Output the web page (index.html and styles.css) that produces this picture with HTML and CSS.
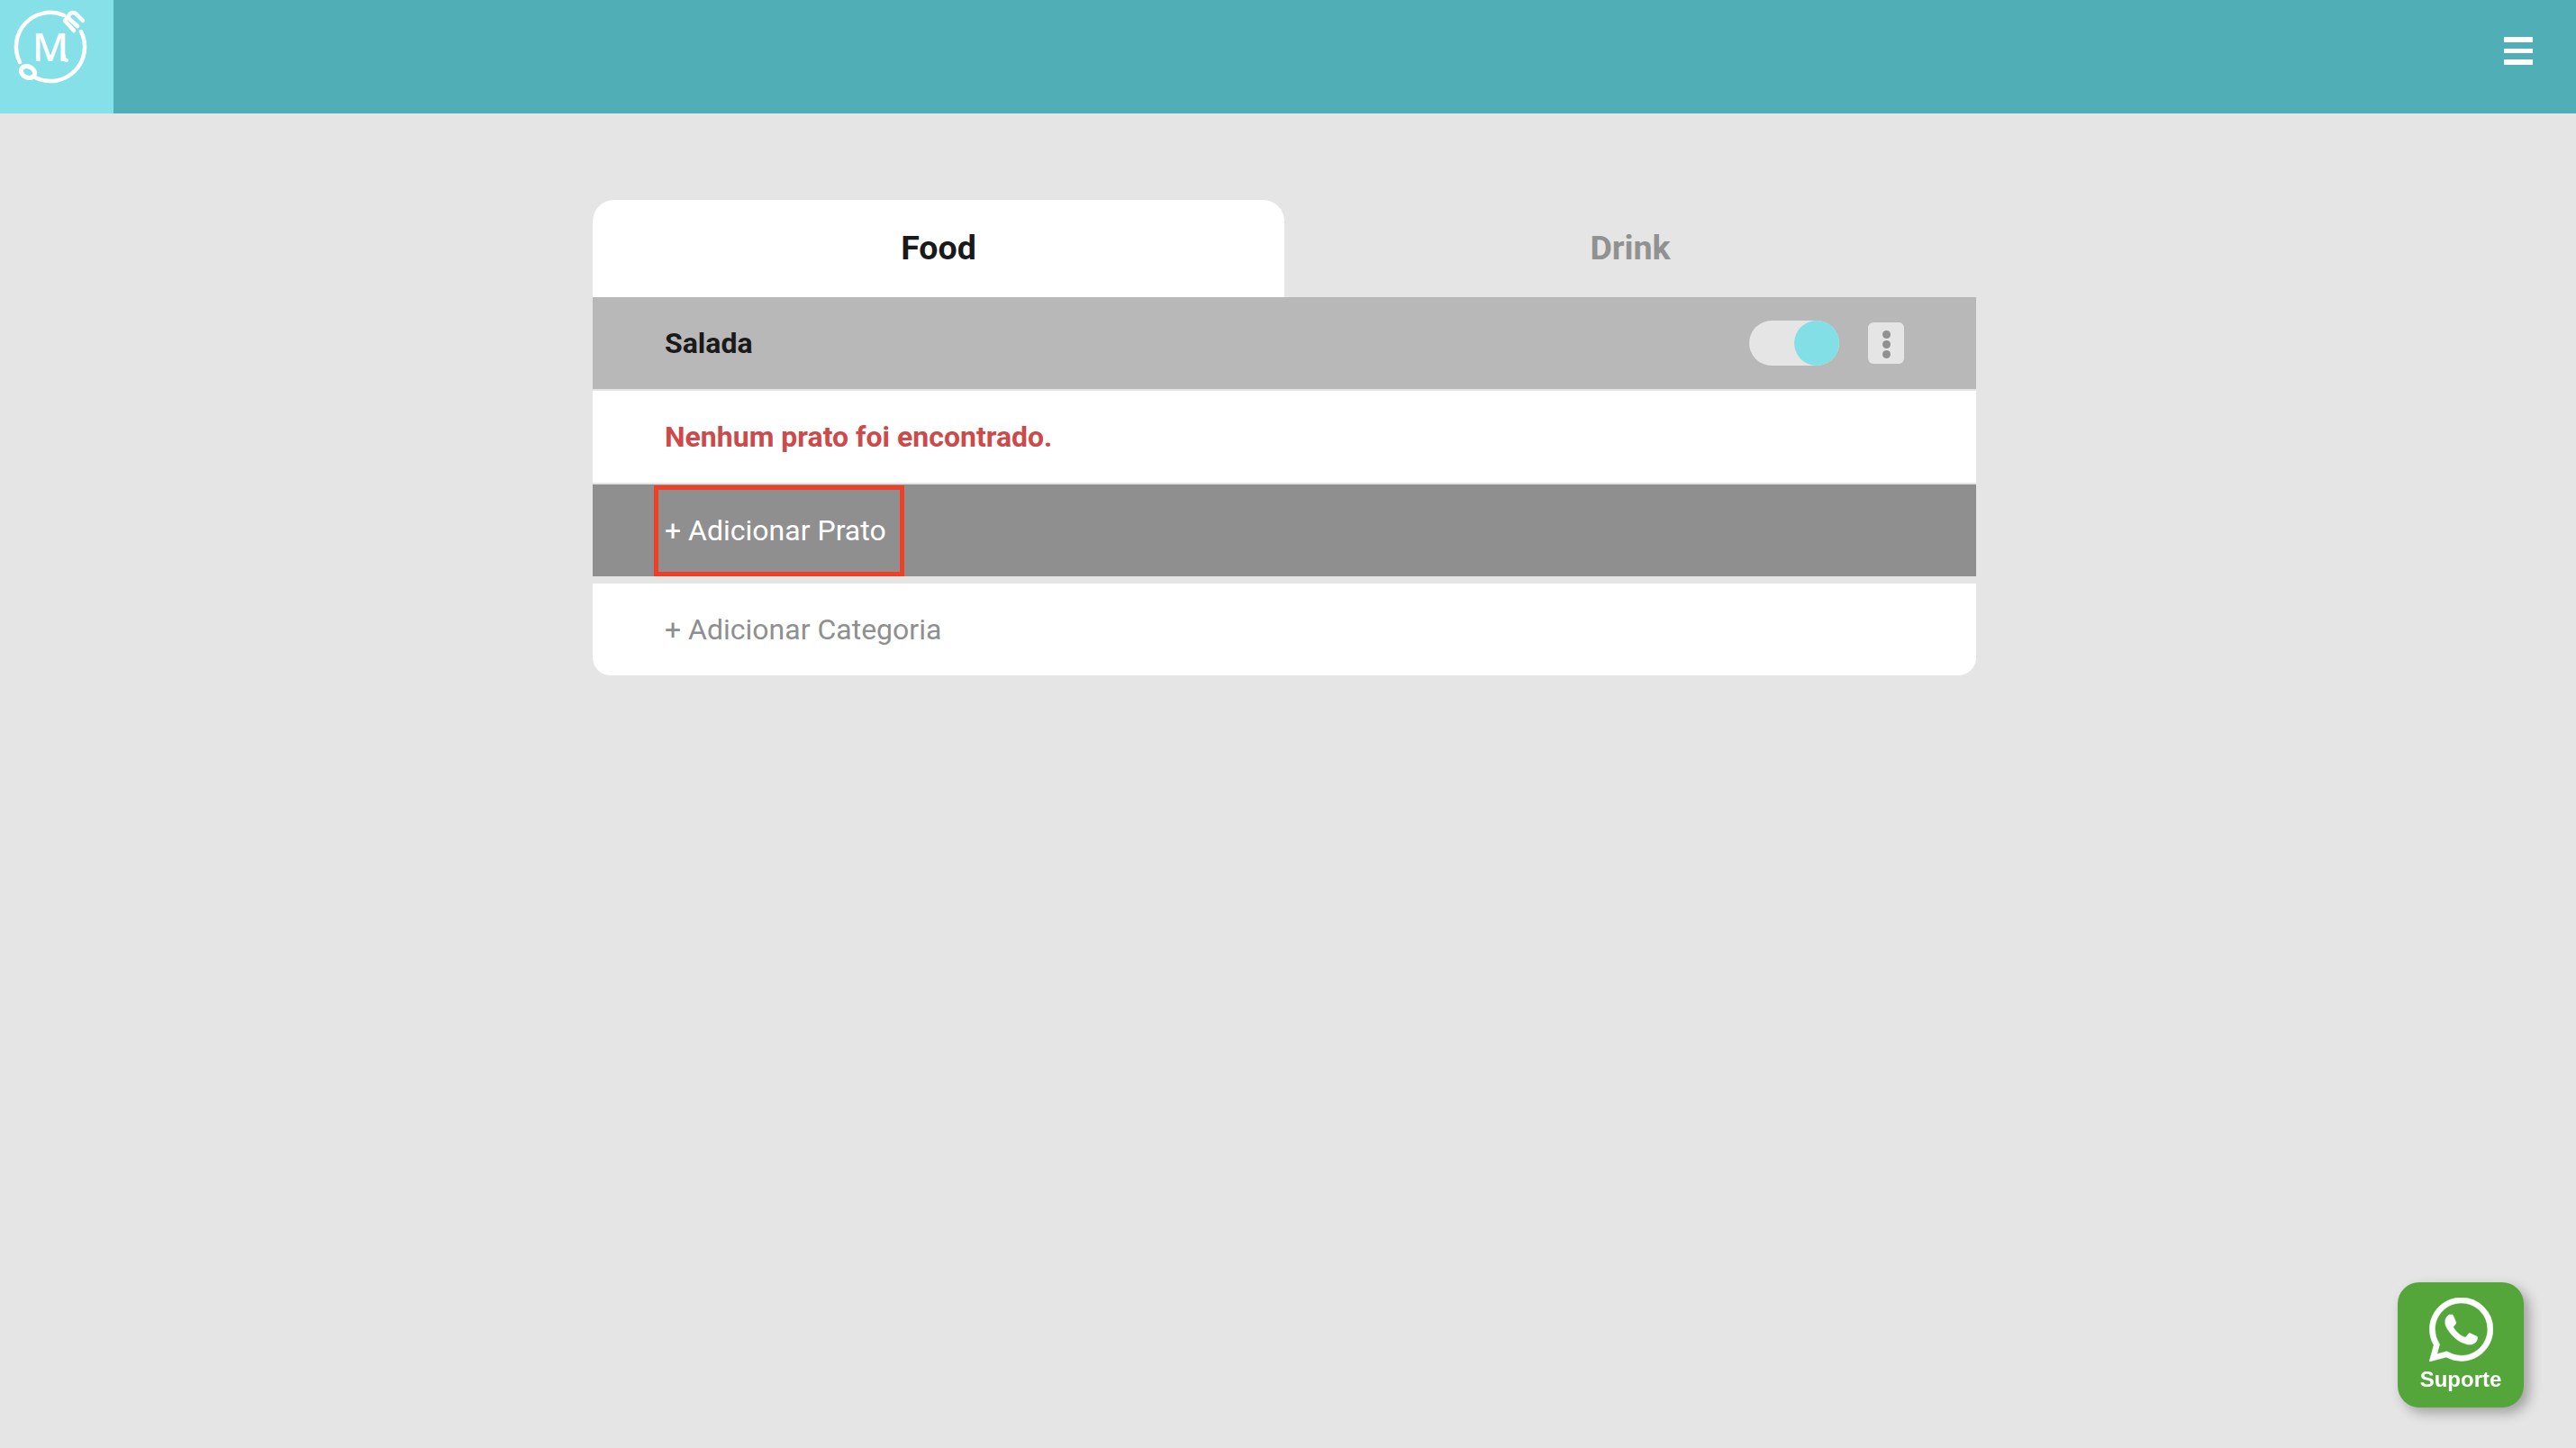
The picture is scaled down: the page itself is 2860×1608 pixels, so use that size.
FILE: index.html
```html
<!DOCTYPE html>
<html lang="pt-BR">
<head>
    <meta charset="UTF-8">
    <meta name="viewport" content="width=device-width, initial-scale=1.0">
    <title>Menu</title>
    <link rel="stylesheet" href="styles.css">
</head>
<body>
    <header class="topbar">
        <a class="logo" href="#">
            <svg viewBox="0 0 126 126" width="126" height="126">
                <g fill="none" stroke="#fff" stroke-width="4.5" stroke-linecap="round">
                    <path d="M22 69 A38 38 0 0 1 71 17"/>
                    <path d="M90 35 A38 38 0 0 1 40 86.500"/>
                    <ellipse cx="31" cy="80" rx="8" ry="6" stroke-width="5" transform="rotate(25 31 80)"/>
                    <path d="M72 23 L82 34 M72 23 L78 15 Q81 13 84 15 L92 23 M77 21 L86 29"/>
                    <path d="M71 62 Q71 67 74 67" stroke-width="4"/>
                </g>
                <text class="logo-letter" x="56" y="68" text-anchor="middle">M</text>
            </svg>
        </a>
        <button class="menu-btn" aria-label="Menu">
            <span></span>
            <span></span>
            <span></span>
        </button>
    </header>

    <main class="page">
        <section class="card">
            <div class="tabs">
                <div class="tab active">Food</div>
                <div class="tab">Drink</div>
            </div>

            <div class="row category-row">
                <span class="category-name">Salada</span>
                <div class="row-actions">
                    <div class="toggle"><div class="toggle-knob"></div></div>
                    <button class="more-btn" aria-label="Opções">
                        <span></span>
                        <span></span>
                        <span></span>
                    </button>
                </div>
            </div>

            <div class="row empty-row">Nenhum prato foi encontrado.</div>

            <div class="row add-dish-row">
                <span class="add-dish">+ Adicionar Prato</span>
            </div>

            <div class="row add-category-row">+ Adicionar Categoria</div>
        </section>
    </main>

    <a class="support" href="#">
        <svg viewBox="0 0 24 24" width="71" height="71">
            <path fill="#fff" stroke="#fff" stroke-width="0.2" d="M17.472 14.382c-.297-.149-1.758-.867-2.03-.967-.273-.099-.471-.148-.67.15-.197.297-.767.966-.94 1.164-.173.199-.347.223-.644.075-.297-.15-1.255-.463-2.39-1.475-.883-.788-1.48-1.761-1.653-2.059-.173-.297-.018-.458.13-.606.134-.133.298-.347.446-.52.149-.174.198-.298.298-.497.099-.198.05-.371-.025-.52-.075-.149-.669-1.612-.916-2.207-.242-.579-.487-.5-.669-.51-.173-.008-.371-.01-.57-.01-.198 0-.52.074-.792.372-.272.297-1.04 1.016-1.04 2.479 0 1.462 1.065 2.875 1.213 3.074.149.198 2.096 3.2 5.077 4.487.709.306 1.262.489 1.694.625.712.227 1.36.195 1.871.118.571-.085 1.758-.719 2.006-1.413.248-.694.248-1.289.173-1.413-.074-.124-.272-.198-.57-.347m-5.421 7.403h-.004a9.87 9.87 0 01-5.031-1.378l-.361-.214-3.741.982.998-3.648-.235-.374a9.86 9.86 0 01-1.51-5.26c.001-5.45 4.436-9.884 9.888-9.884 2.64 0 5.122 1.03 6.988 2.898a9.825 9.825 0 012.893 6.994c-.003 5.45-4.437 9.884-9.885 9.884m8.413-18.297A11.815 11.815 0 0012.05 0C5.495 0 .16 5.335.157 11.892c0 2.096.547 4.142 1.588 5.945L.057 24l6.305-1.654a11.882 11.882 0 005.683 1.448h.005c6.554 0 11.89-5.335 11.893-11.893a11.821 11.821 0 00-3.48-8.413z"/>
        </svg>
        <span class="support-label">Suporte</span>
    </a>
</body>
</html>
```

FILE: styles.css
```css
* {
    box-sizing: border-box;
}

html, body {
    height: 100%;
}

body {
    margin: 0;
    background-color: #e5e5e5;
    font-family: Roboto, 'Liberation Sans', sans-serif;
    overflow: hidden;
}

.topbar {
    display: flex;
    justify-content: space-between;
    height: 126px;
    background-color: #50aeb7;
}

.logo {
    display: block;
    width: 126px;
    height: 126px;
    background-color: #85e0e8;
}

.logo svg {
    display: block;
}

.logo-letter {
    font-family: 'Noto Sans', sans-serif;
    font-size: 44px;
    font-weight: 500;
    fill: #fff;
}

.menu-btn {
    display: flex;
    flex-direction: column;
    gap: 7px;
    width: 32px;
    margin: 41px 48px 0 0;
    padding: 0;
    border: none;
    background: none;
}

.menu-btn span {
    display: block;
    height: 5.5px;
    background-color: #fff;
}

.page {
    padding: 96px 8px 0 0;
}

.card {
    width: 1536px;
    margin: 0 auto;
}

.tabs {
    display: flex;
    height: 108px;
}

.tab {
    flex: 1;
    display: flex;
    align-items: center;
    justify-content: center;
    padding-bottom: 3px;
    font-size: 37.5px;
    font-weight: 700;
    color: #919191;
}

.tab.active {
    background-color: #fff;
    color: #1a1a1a;
    border-radius: 24px 24px 0 0;
}

.row {
    display: flex;
    align-items: center;
    height: 102px;
    padding-left: 80px;
    font-size: 32px;
}

.category-row {
    justify-content: space-between;
    padding-right: 80px;
    background-color: #b8b8b8;
}

.category-name {
    font-weight: 700;
    color: #1a1a1a;
}

.row-actions {
    display: flex;
    align-items: center;
    gap: 32px;
}

.toggle {
    display: flex;
    justify-content: flex-end;
    width: 100px;
    height: 50px;
    border-radius: 25px;
    background-color: #e5e5e5;
}

.toggle-knob {
    width: 50px;
    height: 50px;
    border-radius: 50%;
    background-color: #82dfe5;
}

.more-btn {
    display: flex;
    flex-direction: column;
    align-items: center;
    justify-content: center;
    gap: 2px;
    width: 40px;
    height: 46px;
    padding: 2px 0 0;
    border: none;
    border-radius: 6px;
    background-color: #e5e5e5;
}

.more-btn span {
    width: 9px;
    height: 9px;
    border-radius: 50%;
    background-color: #919191;
}

.empty-row {
    margin-top: 2px;
    background-color: #fff;
    font-weight: 700;
    color: #cc4a4a;
}

.add-dish-row {
    margin-top: 2px;
    padding-left: 68px;
    background-color: #8f8f8f;
    color: #fff;
}

.add-dish {
    display: flex;
    align-items: center;
    width: 278px;
    height: 101px;
    margin-top: 1px;
    padding: 0 0 2px 7px;
    border: 5px solid #ee4026;
}

.add-category-row {
    margin-top: 8px;
    background-color: #fff;
    color: #8f8f8f;
    border-radius: 0 0 20px 20px;
}

.support {
    position: fixed;
    right: 58px;
    bottom: 45px;
    display: flex;
    flex-direction: column;
    align-items: center;
    width: 140px;
    height: 139px;
    padding-top: 17px;
    border-radius: 24px;
    background-color: #54a63a;
    box-shadow: 6px 6px 14px rgba(0, 0, 0, 0.3);
    text-decoration: none;
}

.support svg {
    display: block;
}

.support-label {
    margin-top: 6px;
    font-family: 'Liberation Sans', Arial, sans-serif;
    font-size: 24px;
    font-weight: 700;
    color: #fff;
}
```
